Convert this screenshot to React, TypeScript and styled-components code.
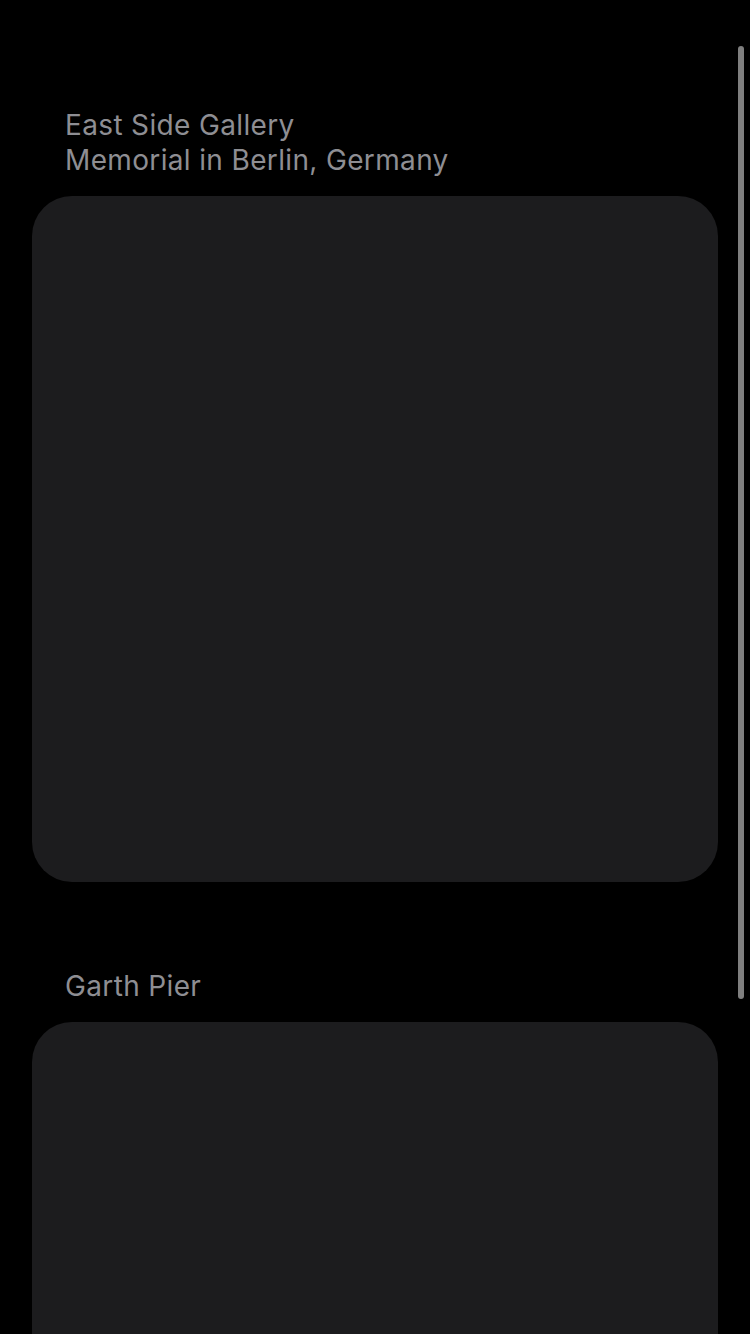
import styled, { createGlobalStyle } from 'styled-components';

const GlobalStyle = createGlobalStyle`
  * {
    box-sizing: border-box;
    margin: 0;
    padding: 0;
  }

  html, body {
    background: #000;
    height: 100%;
    overflow: hidden;
  }

  body {
    font-family: Inter, 'Noto Sans', sans-serif;
  }
`;

const Page = styled.div`
  height: 1334px;
  padding: 108px 32px 0;
  display: flex;
  flex-direction: column;
  overflow: hidden;
  background: #000;
`;

const Section = styled.section<{ $gap?: number }>`
  display: flex;
  flex-direction: column;
  margin-top: ${(p) => p.$gap ?? 0}px;
`;

const Title = styled.h2`
  padding: 0 33px;
  margin-bottom: 18px;
  font-size: 28px;
  line-height: 35px;
  font-weight: 400;
  color: #8e8e93;
  letter-spacing: 0.35px;
`;

const Card = styled.div`
  width: 686px;
  height: 686px;
  flex-shrink: 0;
  border-radius: 40px;
  background: #1c1c1e;
`;

const ScrollIndicator = styled.div`
  position: fixed;
  top: 46px;
  right: 6px;
  width: 6px;
  height: 953px;
  border-radius: 3px;
  background: #7f7f7f;
`;

const places = [
  { id: 1, lines: ['East Side Gallery', 'Memorial in Berlin, Germany'] },
  { id: 2, lines: ['Garth Pier'] },
];

const App: React.FC = () => {
  return (
    <>
      <GlobalStyle />
      <Page>
        {places.map((place, i) => (
          <Section key={place.id} $gap={i === 0 ? 0 : 87}>
            <Title>
              {place.lines.map((line) => (
                <div key={line}>{line}</div>
              ))}
            </Title>
            <Card />
          </Section>
        ))}
      </Page>
      <ScrollIndicator />
    </>
  );
};

export default App;
